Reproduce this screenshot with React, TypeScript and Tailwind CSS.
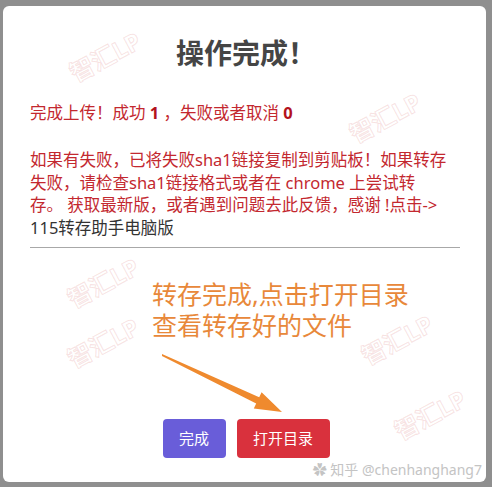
import React from "react";

const marks = [
  { left: 64, top: 35 },
  { left: 344, top: 96 },
  { left: 62, top: 261 },
  { left: 62, top: 321 },
  { left: 356, top: 318 },
  { left: 389, top: 393 },
];

function Watermark({ left, top }: { left: number; top: number }) {
  return (
    <div
      className="absolute pointer-events-none select-none w-[76px] text-center text-[24px] leading-[32px] font-bold text-transparent [-webkit-text-stroke:1px_rgba(220,125,125,0.22)] -rotate-[28deg] whitespace-nowrap"
      style={{ left, top }}
    >
      智汇LP
    </div>
  );
}

export default function App() {
  return (
    <div className="w-[492px] h-[487px] bg-[#8f8f8f] pt-[6px] pl-[3px] pr-[6px] pb-[5px] font-['Noto_Sans','Noto_Sans_CJK_SC',sans-serif]">
      <div className="relative h-full bg-white rounded-[6px] overflow-hidden pl-[27px] pr-[24px] flex flex-col">
        {marks.map((m, i) => (
          <Watermark key={i} {...m} />
        ))}

        <h1 className="mt-[29px] text-center text-[28px] leading-[36px] font-bold text-[#454545]">
          操作完成！
        </h1>

        <p className="mt-[31px] text-[16.5px] leading-[22px] text-[#c3282f]">
          完成上传！成功 <b className="font-bold text-[#b3121c]">1</b> ，失败或者取消{" "}
          <b className="font-bold text-[#b3121c]">0</b>
        </p>

        <div className="mt-[25px] text-[16.5px] leading-[22.5px] whitespace-nowrap">
          <p className="text-[#c3282f]">
            如果有失败，已将失败sha1链接复制到剪贴板！如果转存
            <br />
            失败，请检查sha1链接格式或者在 chrome 上尝试转
            <br />
            存。 获取最新版，或者遇到问题去此反馈，感谢 !点击-&gt;
          </p>
          <p className="text-[#333333]">115转存助手电脑版</p>
        </div>

        <hr className="mt-[8px] mr-[2px] border-t border-[#a8a8a8]" />

        <div className="mt-[31px] ml-[122px] text-[25px] leading-[31px] text-[#e8883a]">
          <div>转存完成,点击打开目录</div>
          <div>查看转存好的文件</div>
        </div>

        <svg
          className="absolute left-[147px] top-[344px]"
          width="140"
          height="72"
          viewBox="0 0 140 72"
        >
          <polygon
            points="12,4 109.2,47.2 111.6,42.3 132,62 103.8,58.5 106.2,53.6 12,6"
            fill="#ef8a2e"
          />
        </svg>

        <div className="mt-auto mb-[24px] flex justify-center gap-[11px] text-[15px] text-white">
          <button className="w-[63px] h-[39px] rounded-[4px] bg-[#695dd9]">完成</button>
          <button className="w-[93px] h-[39px] rounded-[4px] bg-[#d9313d]">打开目录</button>
        </div>

        <div className="absolute right-[4px] bottom-[2px] text-[14px] text-[#c4c4c4] whitespace-nowrap">
          ✿ 知乎 @chenhanghang7
        </div>
      </div>
    </div>
  );
}
